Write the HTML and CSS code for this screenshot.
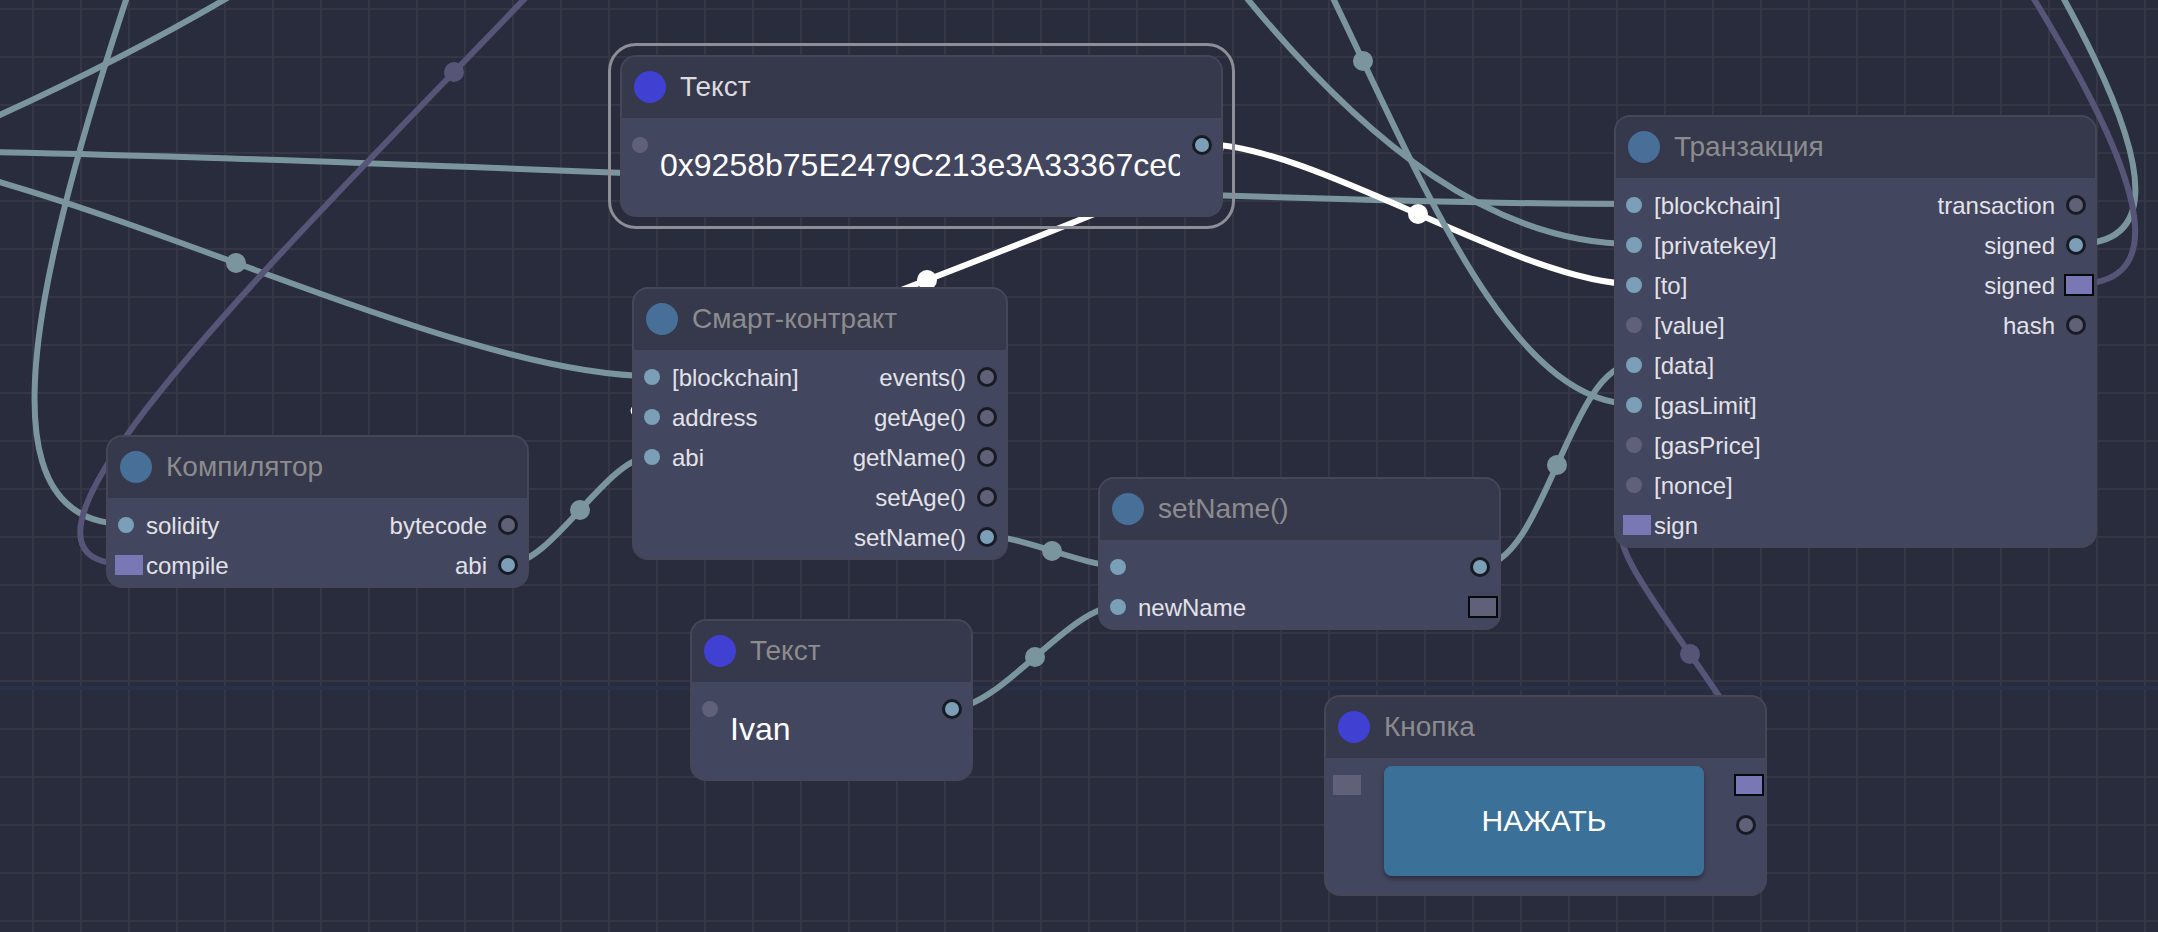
FILE: index.html
```html
<!DOCTYPE html>
<html lang="ru">
<head>
<meta charset="utf-8">
<title>Редактор узлов</title>
<link rel="stylesheet" href="styles.css">
</head>
<body>
<main class="canvas">
  <div class="guide"></div>
  <svg class="links" aria-hidden="true">
    <g class="link">
      <path d="M-20 124 Q131 56 244 -12"/>
      <path d="M262 -926 C626 -926 -238 524 126 524"/>
      <path d="M-180 150 C273 150 1181 204 1634 204"/>
      <path d="M-180 150 C35 150 437 376 652 376"/>
      <circle cx="236" cy="263" r="10"/>
      <path d="M144 -1356 C705 -1356 1073 244 1634 244"/>
    </g>
    <g class="link link-active">
      <path d="M1202 144 C1315 144 1521 284 1634 284"/>
      <circle cx="1418" cy="214" r="10"/>
      <path d="M1202 144 C1355 144 499 416 652 416"/>
      <circle cx="927" cy="280" r="10"/>
    </g>
    <g class="link">
      <path d="M1092 -282 C1310 -282 1416 404 1634 404"/>
      <circle cx="1363" cy="61" r="10"/>
      <path d="M508 564 C553 564 607 456 652 456"/>
      <circle cx="580" cy="510" r="10"/>
      <path d="M987 536 C1021 536 1084 566 1118 566"/>
      <circle cx="1052" cy="551" r="10"/>
      <path d="M952 708 C1001 708 1069 606 1118 606"/>
      <circle cx="1035" cy="657" r="10"/>
      <path d="M1480 566 C1544 566 1570 364 1634 364"/>
      <circle cx="1557" cy="465" r="10"/>
      <path d="M2076 244 C2399 244 1284 -956 1607 -956"/>
    </g>
    <g class="link link-event">
      <path d="M2076 284 C2410 284 1206 -956 1540 -956"/>
      <path d="M782 -420 C1078 -420 -170 564 126 564"/>
      <circle cx="454" cy="72" r="10"/>
      <path d="M1746 784 C1817 784 1563 524 1634 524"/>
      <circle cx="1690" cy="654" r="10"/>
    </g>
  </svg>

  <section class="node node-compiler">
    <header class="node-head"><span class="mark"></span><h2>Компилятор</h2></header>
    <div class="node-body">
      <ul class="ports">
        <li><i class="port on"></i><span>solidity</span></li>
        <li><i class="port event on"></i><span>compile</span></li>
      </ul>
      <ul class="ports out">
        <li><span>bytecode</span><i class="port"></i></li>
        <li><span>abi</span><i class="port on"></i></li>
      </ul>
    </div>
  </section>

  <section class="node node-address selected">
    <header class="node-head"><span class="mark widget"></span><h2>Текст</h2></header>
    <div class="node-body">
      <ul class="ports"><li><i class="port"></i></li></ul>
      <input class="value" type="text" aria-label="Текст" value="0x9258b75E2479C213e3A33367ce0f3a1b">
      <ul class="ports out"><li><i class="port on"></i></li></ul>
    </div>
  </section>

  <section class="node node-contract">
    <header class="node-head"><span class="mark"></span><h2>Смарт-контракт</h2></header>
    <div class="node-body">
      <ul class="ports">
        <li><i class="port on"></i><span>[blockchain]</span></li>
        <li><i class="port on"></i><span>address</span></li>
        <li><i class="port on"></i><span>abi</span></li>
      </ul>
      <ul class="ports out">
        <li><span>events()</span><i class="port"></i></li>
        <li><span>getAge()</span><i class="port"></i></li>
        <li><span>getName()</span><i class="port"></i></li>
        <li><span>setAge()</span><i class="port"></i></li>
        <li><span>setName()</span><i class="port on"></i></li>
      </ul>
    </div>
  </section>

  <section class="node node-name">
    <header class="node-head"><span class="mark widget"></span><h2>Текст</h2></header>
    <div class="node-body">
      <ul class="ports"><li><i class="port"></i></li></ul>
      <input class="value" type="text" aria-label="Текст" value="Ivan">
      <ul class="ports out"><li><i class="port on"></i></li></ul>
    </div>
  </section>

  <section class="node node-setname">
    <header class="node-head"><span class="mark"></span><h2>setName()</h2></header>
    <div class="node-body">
      <ul class="ports">
        <li><i class="port on"></i></li>
        <li><i class="port on"></i><span>newName</span></li>
      </ul>
      <ul class="ports out">
        <li><i class="port on"></i></li>
        <li><i class="port event"></i></li>
      </ul>
    </div>
  </section>

  <section class="node node-transaction">
    <header class="node-head"><span class="mark"></span><h2>Транзакция</h2></header>
    <div class="node-body">
      <ul class="ports">
        <li><i class="port on"></i><span>[blockchain]</span></li>
        <li><i class="port on"></i><span>[privatekey]</span></li>
        <li><i class="port on"></i><span>[to]</span></li>
        <li><i class="port"></i><span>[value]</span></li>
        <li><i class="port on"></i><span>[data]</span></li>
        <li><i class="port on"></i><span>[gasLimit]</span></li>
        <li><i class="port"></i><span>[gasPrice]</span></li>
        <li><i class="port"></i><span>[nonce]</span></li>
        <li><i class="port event on"></i><span>sign</span></li>
      </ul>
      <ul class="ports out">
        <li><span>transaction</span><i class="port"></i></li>
        <li><span>signed</span><i class="port on"></i></li>
        <li><span>signed</span><i class="port event on"></i></li>
        <li><span>hash</span><i class="port"></i></li>
      </ul>
    </div>
  </section>

  <section class="node node-button">
    <header class="node-head"><span class="mark widget"></span><h2>Кнопка</h2></header>
    <div class="node-body">
      <ul class="ports"><li><i class="port event"></i></li></ul>
      <button class="press" type="button">НАЖАТЬ</button>
      <ul class="ports out">
        <li><i class="port event on"></i></li>
        <li><i class="port"></i></li>
      </ul>
    </div>
  </section>
</main>
</body>
</html>
```
FILE: styles.css
```css
* { box-sizing: border-box; }

body {
  margin: 0;
  background: #292c3c;
  font-family: "Liberation Sans", Arial, sans-serif;
}

.canvas {
  position: relative;
  min-height: 100vh;
  overflow: hidden;
  background-color: #292c3c;
  background-image:
    linear-gradient(#353745 2px, transparent 2px),
    linear-gradient(90deg, #353745 2px, transparent 2px);
  background-size: 48px 48px;
  background-position: 32px 8px;
}

.guide {
  position: absolute;
  top: 686px;
  left: 0;
  right: 0;
  height: 4px;
  background: #293049;
}

/* Connections */
.links {
  position: absolute;
  inset: 0;
  width: 100%;
  height: 100%;
}
.link path { fill: none; stroke: #7b959f; stroke-width: 6px; }
.link circle { fill: #7b959f; }
.link-active path { stroke: #fff; }
.link-active circle { fill: #fff; }
.link-event path { stroke: #565577; }
.link-event circle { fill: #565577; }

/* Nodes */
.node {
  position: absolute;
  border: 2px solid #474658;
  border-radius: 16px;
  background: #43465f;
}
.node-compiler { left: 106px; top: 435px; width: 423px; }
.node-address { left: 620px; top: 55px; width: 603px; }
.node-contract { left: 632px; top: 287px; width: 376px; }
.node-name { left: 690px; top: 619px; width: 283px; }
.node-setname { left: 1098px; top: 477px; width: 403px; }
.node-transaction { left: 1614px; top: 115px; width: 483px; }
.node-button { left: 1324px; top: 695px; width: 443px; }

.selected {
  outline: 3px solid #8e8e97;
  outline-offset: 9px;
}

.node-head {
  display: flex;
  align-items: center;
  gap: 14px;
  height: 61px;
  padding: 0 12px 2px;
  border-radius: 14px 14px 0 0;
  background: #36384c;
}
.node-head h2 {
  margin: 0;
  font-size: 28px;
  font-weight: 400;
  line-height: 32px;
  color: #8c8c8e;
}
.selected h2 { color: #dcdce0; }
.mark {
  width: 32px;
  height: 32px;
  border-radius: 50%;
  background: #476f98;
}
.mark.widget { background: #4040d2; }

.node-body {
  display: flex;
  justify-content: space-between;
  align-items: flex-start;
}

/* Ports */
.ports {
  margin: 0;
  padding: 7px 0 1px;
  list-style: none;
  font-size: 24px;
  line-height: 28px;
  color: #e2e2e8;
}
.ports li {
  display: flex;
  align-items: center;
  height: 40px;
}
.ports span { padding-top: 2px; }
.out li { justify-content: flex-end; }

.port {
  flex: none;
  width: 16px;
  height: 16px;
  margin: 0 12px 0 10px;
  border-radius: 50%;
  background: #606179;
}
.port.on { background: #7b9fb6; }
.out .port {
  width: 20px;
  height: 20px;
  margin: 0 9px 0 11px;
  border: 3px solid #191b24;
}
.port.event {
  width: 28px;
  height: 20px;
  margin: 0 3px 0 7px;
  border-radius: 0;
}
.port.event.on { background: #7a78b4; }
.out .port.event {
  width: 30px;
  height: 22px;
  margin: 0 1px 0 9px;
  border: 2px solid #08090d;
}

/* Widgets */
.value {
  flex: 1;
  min-width: 0;
  height: 64px;
  margin: 15px 1px 18px 0;
  padding: 0;
  border: 0;
  outline: 0;
  background: none;
  font: 32px "Liberation Sans", Arial, sans-serif;
  color: #fff;
}

.press {
  flex: 1;
  height: 110px;
  margin: 8px 21px 18px 20px;
  border: 0;
  border-radius: 8px;
  background: #3b7199;
  box-shadow: 0 3px 5px rgba(0, 0, 0, .35);
  font: 30px "Liberation Sans", Arial, sans-serif;
  color: #fff;
}
```
